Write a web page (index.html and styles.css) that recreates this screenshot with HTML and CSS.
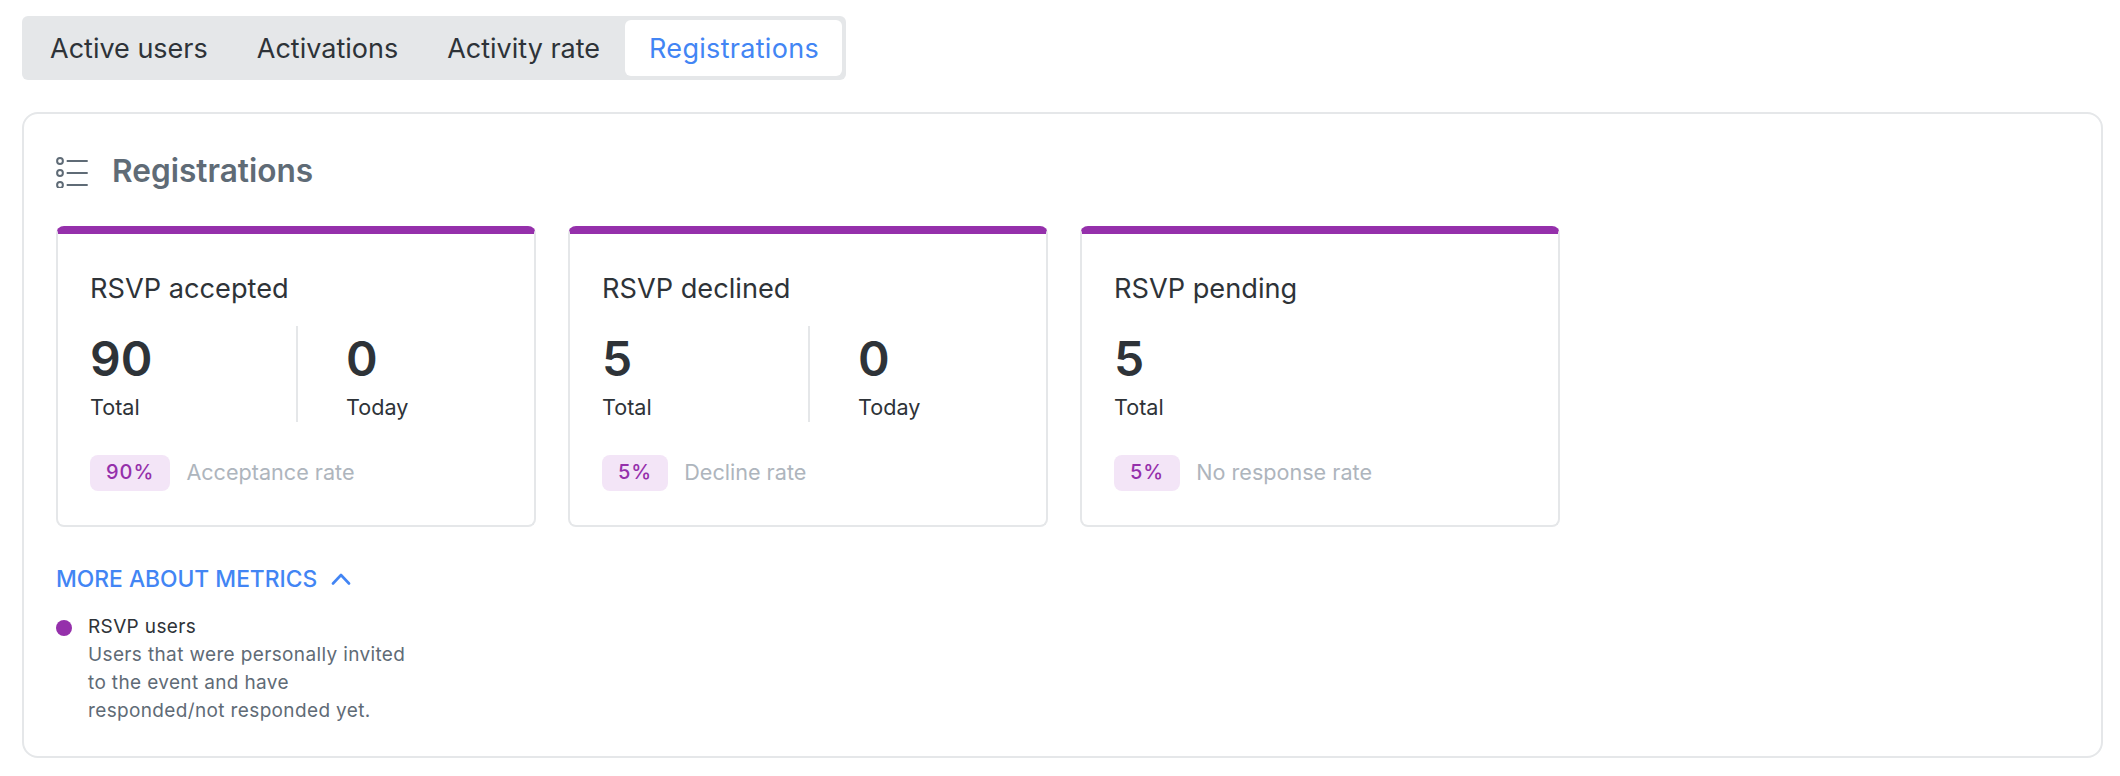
FILE: index.html
```html
<!DOCTYPE html>
<html lang="en">
<head>
<meta charset="utf-8">
<title>Registrations</title>
<link rel="stylesheet" href="styles.css">
</head>
<body>
<nav class="tabs">
  <button class="tab">Active users</button>
  <button class="tab">Activations</button>
  <button class="tab">Activity rate</button>
  <button class="tab tab-active">Registrations</button>
</nav>
<section class="panel">
  <header class="panel-head">
    <svg class="list-icon" viewBox="0 0 32 31" width="32" height="31" fill="none" stroke="#5f6b76" stroke-width="2">
      <circle cx="4" cy="4" r="2.9"/><path d="M10.7 4H31.7"/>
      <circle cx="4" cy="16" r="2.9"/><path d="M10.7 16H31.7"/>
      <circle cx="4" cy="28" r="2.9"/><path d="M10.7 28H31.7"/>
    </svg>
    <h2 class="panel-title">Registrations</h2>
  </header>
  <div class="cards">
    <article class="card">
      <h3 class="card-title">RSVP accepted</h3>
      <div class="stats">
        <div class="stat stat-first"><div class="num">90</div><div class="lab">Total</div></div>
        <div class="stat stat-second"><div class="num">0</div><div class="lab">Today</div></div>
      </div>
      <div class="rate"><span class="pill">90%</span><span class="rate-label">Acceptance rate</span></div>
    </article>
    <article class="card">
      <h3 class="card-title">RSVP declined</h3>
      <div class="stats">
        <div class="stat stat-first"><div class="num">5</div><div class="lab">Total</div></div>
        <div class="stat stat-second"><div class="num">0</div><div class="lab">Today</div></div>
      </div>
      <div class="rate"><span class="pill">5%</span><span class="rate-label">Decline rate</span></div>
    </article>
    <article class="card">
      <h3 class="card-title">RSVP pending</h3>
      <div class="stats">
        <div class="stat"><div class="num">5</div><div class="lab">Total</div></div>
      </div>
      <div class="rate"><span class="pill">5%</span><span class="rate-label">No response rate</span></div>
    </article>
  </div>
  <button class="more">MORE ABOUT METRICS
    <svg class="chevron" viewBox="0 0 20 12" width="20" height="12" fill="none" stroke="#4285f4" stroke-width="2.6" stroke-linecap="round" stroke-linejoin="round"><path d="M2 10.5L10 2L18 10.5"/></svg>
  </button>
  <div class="legend">
    <span class="dot"></span>
    <div class="legend-text">
      <div class="legend-name">RSVP users</div>
      <div class="legend-desc">Users that were personally invited to the event and have responded/not responded yet.</div>
    </div>
  </div>
</section>
</body>
</html>
```
FILE: styles.css
```css
* { box-sizing: border-box; }
html, body { margin: 0; background: #fff; }
body {
  padding: 16px 17px 0 22px;
  font-family: Inter, "Liberation Sans", sans-serif;
  color: #2e3338;
}
.tabs {
  display: inline-flex;
  vertical-align: top;
  gap: 1px;
  padding: 4px;
  background: #e5e7e9;
  border-radius: 6px;
}
.tab {
  height: 56px;
  padding: 2px 24px 0;
  border: 0;
  border-radius: 6px;
  background: transparent;
  font: 400 27px/54px Inter, sans-serif;
  color: #2e3338;
}
.tab-active {
  padding-right: 23px;
  background: #fff;
  color: #4285f4;
  letter-spacing: 0.3px;
}
.panel {
  margin-top: 32px;
  height: 646px;
  border: 2px solid #e5e7e9;
  border-radius: 16px;
  padding: 40px 32px 31px;
}
.panel-head { display: flex; align-items: center; height: 36px; gap: 24px; }
.list-icon { flex: none; }
.panel-title {
  margin: 0;
  padding-bottom: 2px;
  font: 600 31.6px/36px Inter, sans-serif;
  color: #5f6b76;
}
.cards { display: flex; gap: 32px; margin-top: 36px; }
.card {
  width: 480px;
  height: 301px;
  border: 2px solid #e5e7e9;
  border-top: 8px solid #9530ab;
  border-radius: 8px;
  padding: 37px 32px 0;
}
.card-title { margin: 0; font: 400 27.2px/36px Inter, sans-serif; color: #2e3338; }
.stats { display: flex; margin-top: 19px; height: 96px; }
.stat-first { width: 208px; border-right: 2px solid #e5e7e9; }
.stat-second { padding-left: 48px; }
.num { font: 600 48px/66px Inter, sans-serif; color: #2e3338; }
.lab { font: 400 21.6px/30px Inter, sans-serif; color: #2e3338; }
.rate { display: flex; align-items: center; gap: 16px; margin-top: 33px; height: 36px; }
.pill {
  height: 36px;
  padding: 0 16px;
  border-radius: 8px;
  background: #f3e5f7;
  color: #9530ab;
  font: 500 20px/35px Inter, sans-serif;
  letter-spacing: 1px;
}
.rate-label { padding-bottom: 2px; font: 400 21.6px/30px Inter, sans-serif; color: #aeb5bd; }
.more {
  display: flex;
  align-items: center;
  gap: 14px;
  margin: 37px 0 0;
  padding: 0;
  height: 30px;
  border: 0;
  background: none;
  color: #4285f4;
  font: 500 22.8px/30px Inter, sans-serif;
}
.legend { display: flex; gap: 16px; margin-top: 19px; }
.dot { flex: none; width: 16px; height: 16px; margin-top: 7px; border-radius: 50%; background: #9530ab; }
.legend-text { width: 330px; font: 400 19px/28px Inter, sans-serif; letter-spacing: 0.36px; }
.legend-name { color: #2e3338; }
.legend-desc { color: #5f6b76; }
```
